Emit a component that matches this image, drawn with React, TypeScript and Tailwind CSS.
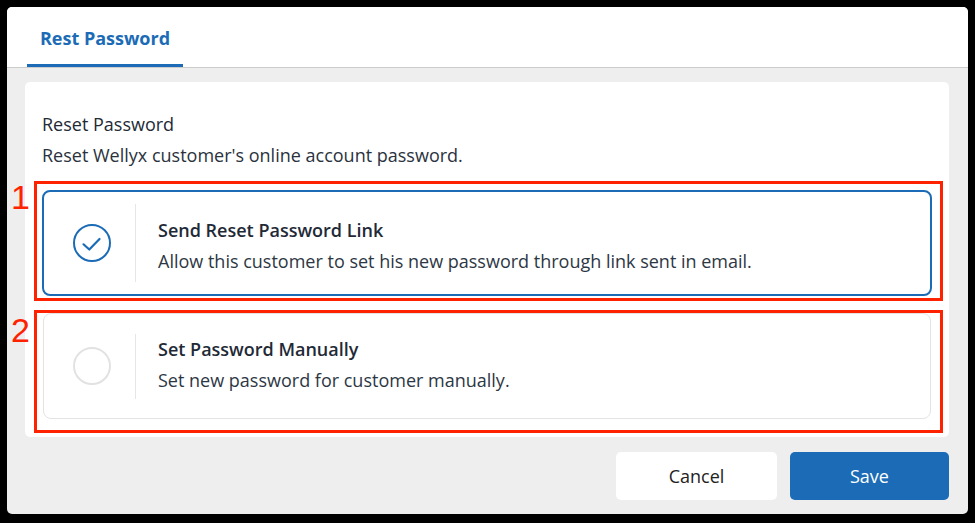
import React from "react";

const font = { fontFamily: '"Open Sans", "Noto Sans", sans-serif' };

const CheckCircle = ({ checked }: { checked: boolean }) => (
  <svg width="38" height="38" viewBox="0 0 38 38" fill="none">
    <circle
      cx="19"
      cy="19"
      r="18"
      stroke={checked ? "#1b6bb6" : "#e2e2e2"}
      strokeWidth="2"
    />
    {checked && (
      <path
        d="M10.5 20.3 L16.3 25.5 L26.5 15"
        stroke="#1b6bb6"
        strokeWidth="2.2"
        strokeLinecap="round"
        strokeLinejoin="round"
      />
    )}
  </svg>
);

type OptionProps = {
  checked: boolean;
  title: string;
  desc: string;
  dividerH: string;
  textPad: string;
};

const Option = ({ checked, title, desc, dividerH, textPad }: OptionProps) => (
  <div
    className={`h-[106px] rounded-[8px] bg-white flex items-center ${
      checked ? "border-2 border-[#1b6bb6]" : "border border-[#e3e3e3]"
    }`}
  >
    <div className="pl-[29px] pr-[24px] flex items-center">
      <CheckCircle checked={checked} />
    </div>
    <div className={`w-px bg-[#e6e6e6] ${dividerH}`} />
    <div className={`pl-[22px] ${textPad} flex flex-col`}>
      <span className="text-[18px] leading-[24px] font-semibold text-[#1f2a37]">
        {title}
      </span>
      <span className="mt-[7px] text-[18px] leading-[24px] text-[#2d3744]">
        {desc}
      </span>
    </div>
  </div>
);

export default function App() {
  return (
    <div
      className="w-[975px] h-[523px] bg-black pt-[7px] pl-[7px]"
      style={font}
    >
      <div className="w-[961px] h-[507px] rounded-[5px] bg-[#eeeeee] overflow-hidden flex flex-col">
        {/* Tabs */}
        <div className="h-[61px] shrink-0 bg-white border-b border-[#cccccc] flex pl-[20px]">
          <div className="w-[156px] h-[60px] pt-[5px] border-b-[3px] border-[#1b6bb6] flex items-center justify-center">
            <span className="text-[18px] font-bold text-[#1b6bb6]">
              Rest Password
            </span>
          </div>
        </div>

        {/* Body */}
        <div className="pl-[18px] pr-[19px] pt-[14px]">
          <div className="h-[355px] bg-white rounded-[5px] pt-[30px]">
            <div className="px-[17px]">
              <div className="text-[18px] leading-[24px] font-medium text-[#222a35]">
                Reset Password
              </div>
              <div className="mt-[7px] text-[18px] leading-[24px] text-[#2a323d]">
                Reset Wellyx customer's online account password.
              </div>
            </div>

            <div className="relative mt-[14px] ml-[9px] mr-[6px] h-[120px] border-[3px] border-[#ff2200] pt-[6px] pl-[5px] pr-[8px]">
              <span className="absolute left-[-26px] top-[-7px] text-[34px] leading-[40px] text-[#ff2200] font-['Liberation_Sans',sans-serif]">
                1
              </span>
              <Option
                checked
                title="Send Reset Password Link"
                desc="Allow this customer to set his new password through link sent in email."
                dividerH="h-[78px]"
                textPad="pt-[5px]"
              />
            </div>

            <div className="relative mt-[9px] ml-[9px] mr-[6px] h-[123px] border-[3px] border-[#ff2200] pl-[6px] pr-[9px]">
              <span className="absolute left-[-26px] top-[-3px] text-[34px] leading-[40px] text-[#ff2200] font-['Liberation_Sans',sans-serif]">
                2
              </span>
              <Option
                checked={false}
                title="Set Password Manually"
                desc="Set new password for customer manually."
                dividerH="h-[65px]"
                textPad="pb-[4px]"
              />
            </div>
          </div>

          {/* Footer */}
          <div className="mt-[15px] flex justify-end gap-[13px]">
            <button className="w-[161px] h-[48px] rounded-[5px] bg-white text-[18px] text-[#222222]">
              Cancel
            </button>
            <button className="w-[159px] h-[48px] rounded-[5px] bg-[#1b6bb6] text-[18px] text-white">
              Save
            </button>
          </div>
        </div>
      </div>
    </div>
  );
}
